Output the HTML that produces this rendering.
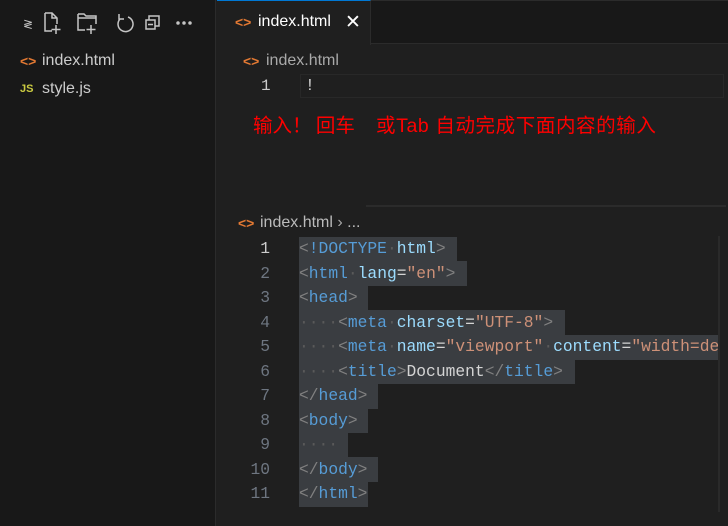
<!DOCTYPE html>
<html><head><style>
*{margin:0;padding:0;box-sizing:border-box}
body{width:728px;height:526px;overflow:hidden;background:#1f1f1f;font-family:"Liberation Sans","Noto Sans CJK SC",sans-serif;position:relative}
.a{position:absolute}
.side{left:0;top:0;width:216px;height:526px;background:#181818;border-right:1px solid #2b2b2b}
.ui{color:#cccccc;font-size:16px;white-space:nowrap}
.code{font-family:"Liberation Mono",monospace;font-size:16.3px;white-space:pre;line-height:24.5px}
.sel{background:#3a3d41;height:24.5px;left:299px}
.t{color:#569cd6}.p{color:#808080}.at{color:#9cdcfe}.s{color:#ce9178}.w{color:#d4d4d4}.d{color:#5a5a5a}
.ico{color:#e37933;font-weight:bold;font-size:14px}
</style></head><body>
<div class="a side"></div>
<svg class="a" style="left:20px;top:8px" width="180" height="30" viewBox="0 0 180 30" fill="none" stroke="#c5c5c5" stroke-width="1.5">
<text x="3" y="20" fill="#c5c5c5" stroke="none" font-size="12" font-family="Liberation Sans">≷</text>
<path d="M25 5h7l5 5v6M25 5v18h7M32 5v5h5M36 17v9M31.5 21.5h9"/>
<path d="M58 6h6l2 2h10v8M58 6v16h7M58 10h18M71 17v9M66.5 21.5h9"/>
<path d="M108 9a7.5 7.5 0 1 1-8 2M99 6v5h5"/>
<path d="M126 12h9v9h-9zM129 12V8h10v10h-4M128 16.5h5"/>
<circle cx="158" cy="15" r="1" fill="#c5c5c5"/><circle cx="164" cy="15" r="1" fill="#c5c5c5"/><circle cx="170" cy="15" r="1" fill="#c5c5c5"/>
</svg>
<div class="a ico" style="left:20px;top:53px">&lt;&gt;</div>
<div class="a ui" style="left:42px;top:52px">index.html</div>
<div class="a" style="left:20px;top:83px;color:#cbcb41;font-weight:bold;font-size:11px">JS</div>
<div class="a ui" style="left:42px;top:80px">style.js</div>
<div class="a" style="left:217px;top:0;width:511px;height:44px;background:#181818;border-bottom:1px solid #2b2b2b;border-top:1px solid #2b2b2b"></div>
<div class="a" style="left:217px;top:0;width:154px;height:45px;background:#1f1f1f;border-top:1px solid #0078d4;border-right:1px solid #2b2b2b"></div>
<div class="a ico" style="left:235px;top:14px">&lt;&gt;</div>
<div class="a" style="left:258px;top:13px;color:#fff;font-size:16px">index.html</div>
<div class="a" style="left:345px;top:11px;color:#fff;font-size:19px">✕</div>
<div class="a ico" style="left:243px;top:53px">&lt;&gt;</div>
<div class="a ui" style="left:266px;top:52px;color:#a9a9a9">index.html</div>
<div class="a" style="left:300px;top:74px;width:424px;height:24px;border:1px solid #282828"></div>
<div class="a" style="left:261px;top:77px;color:#ccc;font-size:16px;font-family:'Liberation Mono',monospace">1</div>
<div class="a code w" style="left:305px;top:74px">!</div>
<div class="a" style="left:253px;top:109px;color:#ff0000;font-size:19.5px;white-space:pre;font-family:'Noto Sans CJK SC',sans-serif">输入！ 回车</div>
<div class="a" style="left:376px;top:109px;color:#ff0000;font-size:19.5px;white-space:pre;letter-spacing:0.6px;font-family:'Liberation Sans','Noto Sans CJK SC',sans-serif">或Tab 自动完成下面内容的输入</div>
<div class="a" style="left:366px;top:205px;width:360px;height:2px;background:#2b2b2b"></div>
<div class="a ico" style="left:238px;top:215px">&lt;&gt;</div>
<div class="a ui" style="left:260px;top:214px;color:#bbb">index.html <span style="color:#aaa">›</span> ...</div>
<div class="a" style="left:718px;top:236px;width:2px;height:276px;background:#2a2a2a"></div>
<div class="a sel" style="top:237px;width:158px"></div>
<div class="a sel" style="top:261px;width:168px"></div>
<div class="a sel" style="top:286px;width:69px"></div>
<div class="a sel" style="top:310px;width:266px"></div>
<div class="a sel" style="top:335px;width:419px"></div>
<div class="a sel" style="top:359px;width:276px"></div>
<div class="a sel" style="top:384px;width:79px"></div>
<div class="a sel" style="top:408px;width:69px"></div>
<div class="a sel" style="top:433px;width:49px"></div>
<div class="a sel" style="top:457px;width:79px"></div>
<div class="a sel" style="top:482px;width:69px"></div>
<div class="a code" style="left:220px;top:237px;width:50px;text-align:right;color:#6e7681"><span style="color:#ccc">1</span>
2
3
4
5
6
7
8
9
10
11</div>
<div class="a code" style="left:299px;top:237px;width:419px;overflow:hidden"><span class="p">&lt;</span><span class="t">!DOCTYPE</span><span class="d">·</span><span class="at">html</span><span class="p">&gt;</span>
<span class="p">&lt;</span><span class="t">html</span><span class="d">·</span><span class="at">lang</span><span class="w">=</span><span class="s">"en"</span><span class="p">&gt;</span>
<span class="p">&lt;</span><span class="t">head</span><span class="p">&gt;</span>
<span class="d">····</span><span class="p">&lt;</span><span class="t">meta</span><span class="d">·</span><span class="at">charset</span><span class="w">=</span><span class="s">"UTF-8"</span><span class="p">&gt;</span>
<span class="d">····</span><span class="p">&lt;</span><span class="t">meta</span><span class="d">·</span><span class="at">name</span><span class="w">=</span><span class="s">"viewport"</span><span class="d">·</span><span class="at">content</span><span class="w">=</span><span class="s">"width=device</span>
<span class="d">····</span><span class="p">&lt;</span><span class="t">title</span><span class="p">&gt;</span><span class="w">Document</span><span class="p">&lt;/</span><span class="t">title</span><span class="p">&gt;</span>
<span class="p">&lt;/</span><span class="t">head</span><span class="p">&gt;</span>
<span class="p">&lt;</span><span class="t">body</span><span class="p">&gt;</span>
<span class="d">····</span>
<span class="p">&lt;/</span><span class="t">body</span><span class="p">&gt;</span>
<span class="p">&lt;/</span><span class="t">html</span><span class="p">&gt;</span></div>
</body></html>
